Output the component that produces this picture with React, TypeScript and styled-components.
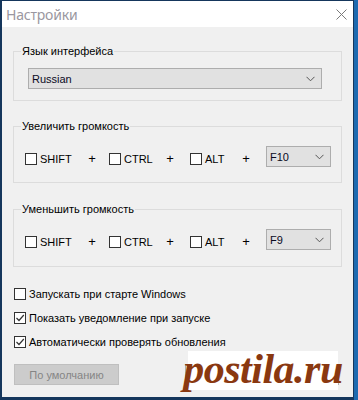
import React from "react";
import styled, { createGlobalStyle } from "styled-components";

const GlobalStyle = createGlobalStyle`
  html, body { margin: 0; padding: 0; }
  body {
    background: #1d6ab0;
    font-family: "Liberation Sans", Arial, sans-serif;
    font-size: 11px;
    color: #000;
  }
`;

const Page = styled.div`
  width: 358px;
  height: 400px;
  display: flex;
  align-items: flex-start;
  background: #1d6ab0;
  overflow: hidden;
`;

const Window = styled.div`
  width: 351px;
  height: 396px;
  border-left: 2px solid #15365c;
  border-top: 1px solid #15365c;
  border-right: 1px solid #15365c;
  border-bottom: 3px solid #15365c;
  display: flex;
  flex-direction: column;
  background: #f0f0f0;
`;

const TitleBar = styled.div`
  height: 26px;
  background: #fff;
  display: flex;
  align-items: center;
  justify-content: space-between;
  padding: 0 6px 0 4px;
`;

const Title = styled.span`
  font-family: "Noto Sans", sans-serif;
  font-size: 14px;
  color: #9a97a0;
  letter-spacing: -0.2px;
`;

const Body = styled.div`
  position: relative;
  flex: 1;
  display: flex;
  flex-direction: column;
  padding: 0 11px 11px 11px;
`;

const Group = styled.section<{ $mt: number; $pt: number; $pb: number; $pl: number; $pr: number }>`
  position: relative;
  margin-top: ${(p) => p.$mt}px;
  border: 1px solid #dcdcdc;
  padding: ${(p) => `${p.$pt}px ${p.$pr}px ${p.$pb}px ${p.$pl}px`};
`;

const GroupTitle = styled.span`
  position: absolute;
  top: -9px;
  left: 7px;
  padding: 0 1px;
  line-height: 16px;
  background: #f0f0f0;
`;

const Select = styled.div<{ $width?: number }>`
  height: 21px;
  box-sizing: border-box;
  width: ${(p) => (p.$width ? `${p.$width}px` : "100%")};
  background: #e1e1e1;
  border: 1px solid #adadad;
  display: flex;
  align-items: center;
  justify-content: space-between;
  padding: 0 6px 0 3px;
  color: #0a0a1e;
`;

const KeyRow = styled.div`
  display: grid;
  grid-template-columns: 50px 34px 41px 40px 36px 40px 65px;
  align-items: center;
`;

const CheckLabel = styled.label<{ $shift?: number }>`
  display: flex;
  align-items: center;
  gap: 3px;
  margin-top: ${(p) => p.$shift ?? 0}px;
  white-space: nowrap;
`;

const Box = styled.span`
  width: 12px;
  height: 12px;
  box-sizing: border-box;
  border: 1px solid #333;
  background: #fff;
  display: inline-flex;
  align-items: center;
  justify-content: center;
  flex: none;
`;

const Plus = styled.span`
  text-align: center;
  margin-top: 4px;
  font-size: 13px;
`;

const Options = styled.div`
  margin-top: 15px;
  padding-left: 1px;
  display: flex;
  flex-direction: column;
`;

const OptionRow = styled.div`
  height: 24px;
  display: flex;
  align-items: center;
`;

const ButtonRow = styled.div`
  margin-top: 10px;
  padding-left: 1px;
  display: flex;
  justify-content: space-between;
  padding-right: 3px;
`;

const Button = styled.button<{ $width: number; $disabled?: boolean }>`
  width: ${(p) => p.$width}px;
  height: 21px;
  box-sizing: border-box;
  font-family: inherit;
  font-size: 11px;
  padding: 0;
  background: ${(p) => (p.$disabled ? "#cccccc" : "#e1e1e1")};
  border: 1px solid ${(p) => (p.$disabled ? "#bfbfbf" : "#adadad")};
  color: ${(p) => (p.$disabled ? "#858585" : "#000")};
`;

const Watermark = styled.div`
  position: absolute;
  left: 186px;
  top: 324px;
  width: 150px;
  height: 39px;
  background: #fff;
  display: flex;
  align-items: center;
  justify-content: center;
  font-family: "Liberation Serif", serif;
  font-weight: bold;
  font-style: italic;
  font-size: 42px;
  line-height: 1;
  color: #8a3810;
  letter-spacing: -0.5px;
  padding-bottom: 3px;
  box-sizing: border-box;
`;

const Chevron = () => (
  <svg width="9" height="6" viewBox="0 0 9 6">
    <path d="M0.5 0.8 L4.5 4.8 L8.5 0.8" fill="none" stroke="#555" strokeWidth="1" />
  </svg>
);

const CloseIcon = () => (
  <svg width="11" height="11" viewBox="0 0 11 11">
    <path d="M0.5 0.5 L10.5 10.5 M10.5 0.5 L0.5 10.5" stroke="#7a7a7a" strokeWidth="1" />
  </svg>
);

const CheckMark = () => (
  <svg width="10" height="10" viewBox="0 0 10 10">
    <path d="M1.5 5 L4 7.5 L8.8 2" fill="none" stroke="#333" strokeWidth="1.2" />
  </svg>
);

const Check = ({ checked, label, shift }: { checked?: boolean; label: string; shift?: number }) => (
  <CheckLabel $shift={shift}>
    <Box>{checked && <CheckMark />}</Box>
    <span>{label}</span>
  </CheckLabel>
);

const HotkeyGroup = ({
  title,
  keyName,
  mt,
  pb,
}: {
  title: string;
  keyName: string;
  mt: number;
  pb: number;
}) => (
  <Group $mt={mt} $pt={19} $pb={pb} $pl={11} $pr={0}>
    <GroupTitle>{title}</GroupTitle>
    <KeyRow>
      <Check label="SHIFT" shift={4} />
      <Plus>+</Plus>
      <Check label="CTRL" shift={4} />
      <Plus>+</Plus>
      <Check label="ALT" shift={4} />
      <Plus>+</Plus>
      <Select>
        <span>{keyName}</span>
        <Chevron />
      </Select>
    </KeyRow>
  </Group>
);

export default function App() {
  return (
    <>
      <GlobalStyle />
      <Page>
        <Window>
          <TitleBar>
            <Title>Настройки</Title>
            <CloseIcon />
          </TitleBar>
          <Body>
            <Group $mt={24} $pt={16} $pb={11} $pl={14} $pr={19}>
              <GroupTitle>Язык интерфейса</GroupTitle>
              <Select>
                <span>Russian</span>
                <Chevron />
              </Select>
            </Group>
            <HotkeyGroup title="Увеличить громкость" keyName="F10" mt={25} pb={15} />
            <HotkeyGroup title="Уменьшить громкость" keyName="F9" mt={26} pb={16} />
            <Options>
              <OptionRow>
                <Check label="Запускать при старте Windows" />
              </OptionRow>
              <OptionRow>
                <Check checked label="Показать уведомление при запуске" />
              </OptionRow>
              <OptionRow>
                <Check checked label="Автоматически проверять обновления" />
              </OptionRow>
            </Options>
            <ButtonRow>
              <Button $width={105} $disabled>
                По умолчанию
              </Button>
              <Button $width={154} />
            </ButtonRow>
            <Watermark>postila.ru</Watermark>
          </Body>
        </Window>
      </Page>
    </>
  );
}
